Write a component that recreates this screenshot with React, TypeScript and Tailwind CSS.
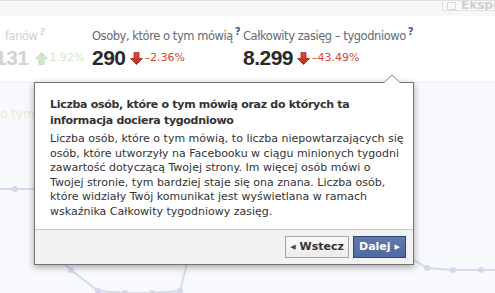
import React from "react";

const DownArrow = () => (
  <svg width="13" height="13" viewBox="0 0 13 13" className="shrink-0">
    <defs>
      <linearGradient id="dn" x1="0" y1="0" x2="0" y2="1">
        <stop offset="0" stopColor="#e0553f" />
        <stop offset="1" stopColor="#b8261b" />
      </linearGradient>
    </defs>
    <path d="M4 0.5h5v6h3.5L6.5 12.5 0.5 6.5H4z" fill="url(#dn)" stroke="#a3231a" strokeWidth="0.8" strokeLinejoin="round" />
  </svg>
);

const UpArrow = () => (
  <svg width="13" height="13" viewBox="0 0 13 13" className="shrink-0">
    <path d="M4 12.5h5v-6h3.5L6.5 0.5 0.5 6.5H4z" fill="#cfe8c6" stroke="#bcdcb1" strokeWidth="0.8" strokeLinejoin="round" />
  </svg>
);

const Stat = ({ label, value, change }: { label: string; value: string; change: string }) => (
  <div className="flex flex-col">
    <div className="text-[11.5px] leading-[16px] tracking-[-0.45px] text-[#666a73] whitespace-nowrap">
      {label}
      <sup className="text-[10px] font-bold text-[#3b5998] ml-[2px] -top-[5px]">?</sup>
    </div>
    <div className="flex items-center mt-[3px] h-[20px]">
      <span className="font-['Liberation_Sans',sans-serif] font-bold text-[21px] leading-none tracking-[-0.5px] text-[#2a2a2a]">
        {value}
      </span>
      <span className="ml-[4px] mt-[2px]"><DownArrow /></span>
      <span className="ml-[2px] mt-[3px] text-[11px] text-[#d8432e]">{change}</span>
    </div>
  </div>
);

export default function App() {
  return (
    <div className="relative w-[495px] h-[293px] overflow-hidden bg-white font-['DejaVu_Sans',sans-serif]">
      <div className="h-[16px] bg-[#f6f7f8] border-t border-[#e2e2e2] flex justify-end">
        <div className="w-[53px] h-[11px] -mt-[1px] border border-[#e0e0e0] bg-[#fafafa] flex items-center pl-[4px] gap-[5px] overflow-hidden">
          <span className="w-[9px] h-[8px] border border-[#d8d8d8] shrink-0" />
          <span className="text-[12px] leading-none text-[#cfcfcf] font-bold -mt-[2px]">Eksport</span>
        </div>
      </div>

      <div className="flex h-[66px] pt-[12px]">
        <div className="w-[92px] flex flex-col overflow-hidden">
          <div className="text-[11.5px] leading-[16px] tracking-[-0.45px] text-[#d2d2d2] pl-[5px] whitespace-nowrap">
            fanów<sup className="text-[10px] font-bold text-[#c9d2e4] ml-[2px] -top-[5px]">?</sup>
          </div>
          <div className="flex items-center mt-[3px] h-[20px] -ml-[5px]">
            <span className="font-['Liberation_Sans',sans-serif] font-bold text-[21px] leading-none tracking-[-0.5px] text-[#d3d3d3]">131</span>
            <span className="ml-[6px] mt-[2px]"><UpArrow /></span>
            <span className="ml-[2px] mt-[3px] text-[11px] text-[#cfe5c8]">1.92%</span>
          </div>
        </div>
        <div className="w-[151px]">
          <Stat label="Osoby, które o tym mówią" value="290" change="–2.36%" />
        </div>
        <Stat label="Całkowity zasięg – tygodniowo" value="8.299" change="–43.49%" />
      </div>

      <div className="relative h-[211px] bg-[#f8f9fc] border-t border-[#ececec]">
        <div className="absolute left-0 top-[22px] text-[12px] text-[#ebead6]">o tym</div>
        <svg className="absolute inset-0" width="495" height="211" viewBox="0 82 495 211">
          <g stroke="#d5daeb" strokeWidth="2" fill="none">
            <polyline points="0,188 15,188 40,188" />
            <polyline points="66,264 71,269 98,290 125,292 152,292 180,290 187,262" />
            <polyline points="412,258 427,267 453,269 481,269 495,269" />
          </g>
          <g fill="#d3d9ec">
            <circle cx="15" cy="188" r="3" />
            <circle cx="71" cy="269" r="3" />
            <circle cx="98" cy="290" r="3" />
            <circle cx="125" cy="292" r="3" />
            <circle cx="152" cy="292" r="3" />
            <circle cx="180" cy="290" r="3" />
            <circle cx="427" cy="267" r="3" />
            <circle cx="453" cy="269" r="3" />
            <circle cx="481" cy="269" r="3" />
          </g>
        </svg>
      </div>

      <div className="absolute left-[34px] top-[82px] w-[380px] h-[183px] bg-white border border-[#737373] shadow-[0_2px_7px_rgba(0,0,0,0.35)] flex flex-col">
        <svg className="absolute -top-[9px] left-[348px]" width="18" height="10" viewBox="0 0 18 10">
          <path d="M0 9.5 L9 0.8 L18 9.5" fill="white" stroke="#8a8a8a" strokeWidth="1" />
          <rect x="0" y="9" width="18" height="2" fill="white" />
        </svg>
        <div className="flex-1 pl-[15px] pr-[8px] pt-[14px] text-[#333]">
          <div className="text-[11px] leading-[16px] font-bold tracking-[-0.3px]">
            Liczba osób, które o tym mówią oraz do których ta informacja dociera tygodniowo
          </div>
          <div className="mt-[3px] text-[11px] leading-[14.5px]">
            Liczba osób, które o tym mówią, to liczba niepowtarzających się osób, które utworzyły na Facebooku w ciągu minionych tygodni zawartość dotyczącą Twojej strony. Im więcej osób mówi o Twojej stronie, tym bardziej staje się ona znana. Liczba osób, które widziały Twój komunikat jest wyświetlana w ramach wskaźnika Całkowity tygodniowy zasięg.
          </div>
        </div>
        <div className="h-[35px] bg-[#f2f2f2] border-t border-[#c9c9c9] flex items-center justify-end gap-[4px] pr-[7px]">
          <button className="h-[22px] w-[64px] border border-[#a5a5a5] bg-[linear-gradient(#fafafa,#ececec)] flex items-center justify-center gap-[4px] text-[11px] font-bold text-[#333]">
            <span className="text-[7px] text-[#444]">◀</span>Wstecz
          </button>
          <button className="h-[22px] w-[53px] border border-[#29447e] bg-[linear-gradient(#6178ab,#5069a1)] flex items-center justify-center gap-[4px] text-[11px] font-bold text-white">
            Dalej<span className="text-[7px]">▶</span>
          </button>
        </div>
      </div>
    </div>
  );
}
